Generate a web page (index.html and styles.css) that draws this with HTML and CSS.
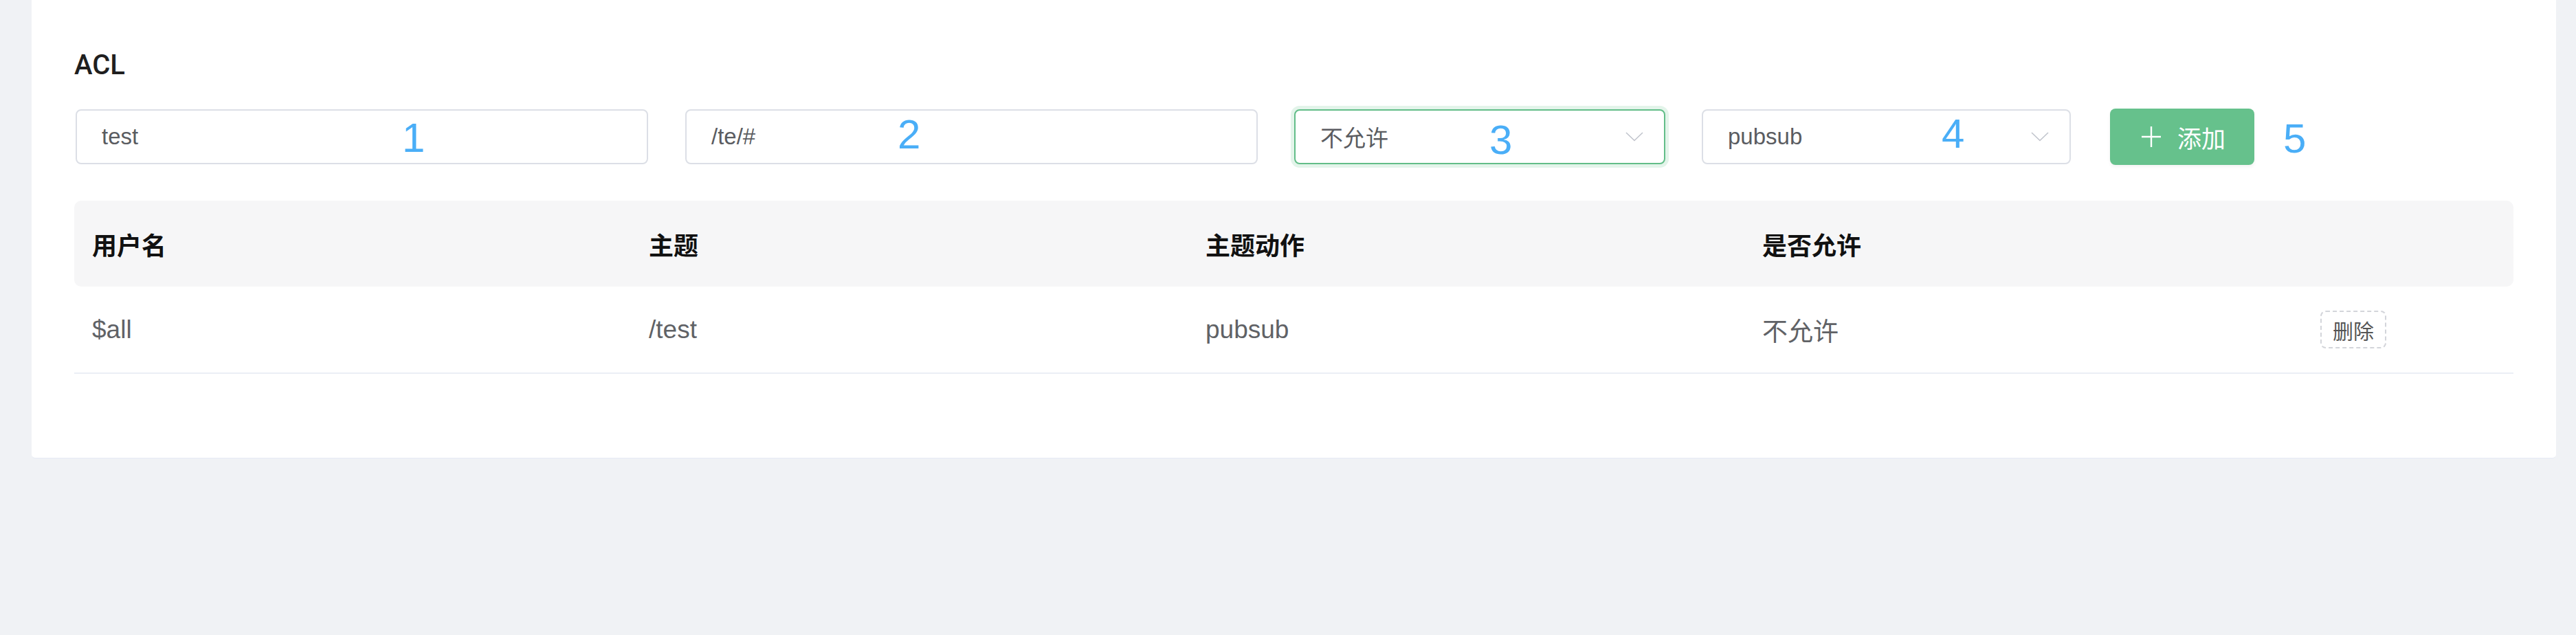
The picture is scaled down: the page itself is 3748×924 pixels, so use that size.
FILE: index.html
```html
<!DOCTYPE html>
<html lang="zh-CN">
<head>
<meta charset="utf-8">
<title>ACL</title>
<link rel="stylesheet" href="styles.css">
</head>
<body>
<div class="page">
  <section class="card">
    <h2 class="title">ACL</h2>
    <div class="form-row">
      <div class="field field-wide">
        <div class="input"><span class="value">test</span></div>
        <span class="mark mark-1">1</span>
      </div>
      <div class="field field-wide">
        <div class="input"><span class="value">/te/#</span></div>
        <span class="mark mark-2">2</span>
      </div>
      <div class="field field-select3">
        <div class="input select is-focus">
          <span class="value">不允许</span>
          <svg class="arrow" viewBox="0 0 26 14" width="26" height="14"><polyline points="1,1 13,12.5 25,1" fill="none" stroke="#c0c4cc" stroke-width="1.6"/></svg>
        </div>
        <span class="mark mark-3">3</span>
      </div>
      <div class="field field-select4">
        <div class="input select">
          <span class="value">pubsub</span>
          <svg class="arrow" viewBox="0 0 26 14" width="26" height="14"><polyline points="1,1 13,12.5 25,1" fill="none" stroke="#c0c4cc" stroke-width="1.6"/></svg>
        </div>
        <span class="mark mark-4">4</span>
      </div>
      <button class="btn-add" type="button">
        <svg class="plus" viewBox="0 0 28 30" width="28" height="30"><path d="M14 0 V30 M0 15 H28" stroke="#fff" stroke-width="2.4" fill="none"/></svg>
        <span>添加</span>
      </button>
      <span class="mark-inline">5</span>
    </div>

    <div class="table">
      <div class="thead">
        <div class="cell">用户名</div>
        <div class="cell">主题</div>
        <div class="cell">主题动作</div>
        <div class="cell">是否允许</div>
        <div class="cell"></div>
      </div>
      <div class="trow">
        <div class="cell">$all</div>
        <div class="cell">/test</div>
        <div class="cell">pubsub</div>
        <div class="cell">不允许</div>
        <div class="cell"><button class="btn-del" type="button">删除</button></div>
      </div>
    </div>
  </section>
</div>
</body>
</html>
```

FILE: styles.css
```css
html, body {
  margin: 0;
  padding: 0;
  background: #f0f2f5;
}

body {
  font-family: "Liberation Sans", Arial, "Noto Sans CJK SC", sans-serif;
  color: #606266;
}

.page {
  padding: 0 29px 0 46px;
  height: 924px;
  box-sizing: border-box;
}

.card {
  background: #ffffff;
  padding: 75px 62px 122px 62px;
  border-bottom: 2px solid #ebeef5;
  border-radius: 0 0 6px 6px;
}

.title {
  margin: 0;
  font-family: Roboto, "Liberation Sans", sans-serif;
  font-size: 40px;
  line-height: 40px;
  font-weight: 500;
  color: #1f1f1f;
  height: 40px;
}

.form-row {
  margin-top: 44px;
  padding-left: 2px;
  display: flex;
  align-items: flex-start;
  height: 80px;
}

.field {
  position: relative;
  height: 80px;
}

.field-wide { width: 833px; margin-right: 54px; }
.field-wide + .field-wide { margin-right: 53px; }
.field-select3 { width: 540px; margin-right: 53px; }
.field-select4 { width: 537px; margin-right: 57px; }

.input {
  box-sizing: border-box;
  height: 80px;
  border: 2px solid #dcdfe6;
  border-radius: 8px;
  background: #fff;
  padding: 0 30px 0 36px;
  display: flex;
  align-items: center;
  justify-content: space-between;
}

.value {
  font-size: 33px;
  color: #5a5c61;
  font-family: "Liberation Sans", Arial, "Noto Sans CJK SC", sans-serif;
}

.select.is-focus {
  border-color: #62bd88;
  box-shadow: 0 0 0 5px #e3f4ea;
}

.arrow {
  display: block;
  flex: none;
}

.mark, .mark-inline {
  font-family: "Liberation Sans", Arial, sans-serif;
  font-size: 60px;
  line-height: 60px;
  color: #4aaef7;
}

.mark {
  position: absolute;
  top: 12px;
}

.mark-1 { left: 475px; top: 12px; }
.mark-2 { left: 309px; top: 7px; }
.mark-3 { left: 284px; top: 15px; }
.mark-4 { left: 349px; top: 6px; }

.mark-inline {
  margin-left: 42px;
  margin-top: 13px;
}

.btn-add {
  margin-top: -1px;
  height: 82px;
  box-sizing: border-box;
  border: none;
  border-radius: 8px;
  background: #66c18c;
  color: #fff;
  display: flex;
  align-items: center;
  gap: 24px;
  padding: 0 42px 0 46px;
  font-family: "Noto Sans CJK SC", sans-serif;
  font-size: 35px;
  box-shadow: 0 3px 5px rgba(0, 0, 0, 0.05);
}

.plus { display: block; }

.table {
  margin-top: 53px;
}

.thead, .trow {
  display: grid;
  grid-template-columns: 810px 810px 810px 810px 1fr;
  align-items: center;
}

.thead {
  height: 125px;
  background: #f6f6f7;
  border-radius: 10px;
}

.thead .cell {
  font-family: "Liberation Sans", Arial, "Noto Sans CJK SC", sans-serif;
  font-weight: bold;
  font-size: 36px;
  color: #111;
}

.trow {
  height: 125px;
  border-bottom: 2px solid #ebeef5;
}

.trow .cell {
  font-size: 37px;
  color: #606266;
}

.cell {
  padding-left: 26px;
}

.btn-del {
  margin-left: 2px;
  width: 96px;
  height: 55px;
  box-sizing: border-box;
  border: 2px dashed #d3d5da;
  border-radius: 8px;
  background: #fff;
  color: #555;
  font-family: "Noto Sans CJK SC", sans-serif;
  font-size: 30px;
  line-height: 1;
  padding: 0;
}
```
